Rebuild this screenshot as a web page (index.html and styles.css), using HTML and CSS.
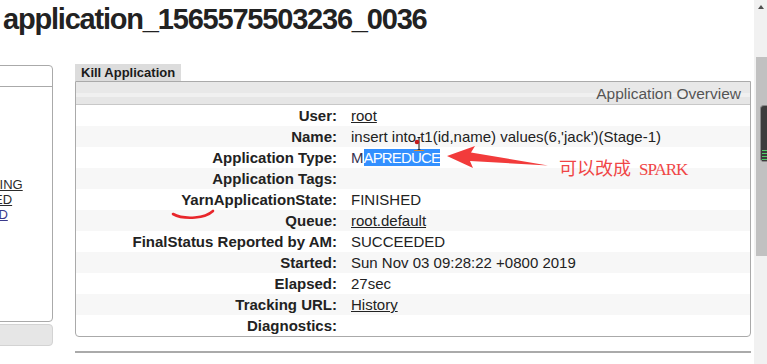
FILE: index.html
```html
<!DOCTYPE html>
<html lang="en">

<head>
    <meta charset="UTF-8" />
    <title>Application application_1565575503236_0036</title>
    <link rel="stylesheet" href="styles.css">
</head>

<body>
    <div class="page">
        <div class="content">
            <h1 class="app-title">application_1565575503236_0036</h1>

            <div class="layout">
                <!-- Left navigation (scrolled partly out of view) -->
                <aside class="nav">
                    <div class="nav-box">
                        <div class="nav-head"></div>
                        <ul class="nav-list">
                            <li><a href="#">NEW_SAVING</a></li>
                            <li><a href="#">SUBMITTED</a></li>
                            <li><a href="#" class="visited">ACCEPTED</a></li>
                        </ul>
                    </div>
                    <div class="nav-fold"></div>
                </aside>

                <main class="main">
                    <button class="kill-btn">Kill Application</button>
                    <div class="overview">
                        <div class="overview-head">Application Overview</div>
                        <table class="info">
                            <tr><th>User:</th><td><a href="#">root</a></td></tr>
                            <tr><th>Name:</th><td>insert into t1(id,name) values(6,'jack')(Stage-1)</td></tr>
                            <tr><th>Application Type:</th><td><span class="dim">M</span><span class="sel">APREDUCE</span></td></tr>
                            <tr><th>Application Tags:</th><td></td></tr>
                            <tr><th>YarnApplicationState:</th><td>FINISHED</td></tr>
                            <tr><th>Queue:</th><td><a href="#">root.default</a></td></tr>
                            <tr><th>FinalStatus Reported by AM:</th><td>SUCCEEDED</td></tr>
                            <tr><th>Started:</th><td>Sun Nov 03 09:28:22 +0800 2019</td></tr>
                            <tr><th>Elapsed:</th><td>27sec</td></tr>
                            <tr><th>Tracking URL:</th><td><a href="#">History</a></td></tr>
                            <tr><th>Diagnostics:</th><td></td></tr>
                        </table>
                    </div>
                    <div class="next-section"></div>
                </main>
            </div>

            <!-- Hand-drawn annotations over the screenshot -->
            <svg class="marks" width="754" height="364" viewBox="0 0 754 364">
                <path d="M447,156 L475,146 L471,152.5 L548,165.5 L470,161 L473,168 Z" fill="#f23b3b" />
                <path d="M173,214 Q181,218.5 195,217.5 Q207,216.5 213,211" fill="none" stroke="#e8262b" stroke-width="2.6" stroke-linecap="round" />
                <path d="M417.5,137.5 h3 M419,137.5 v12.5 M417.5,150 h3" stroke="#111" stroke-width="1" fill="none" />
                <line x1="414" y1="150.5" x2="424" y2="150.5" stroke="#d9892f" stroke-width="1" />
                <circle cx="417" cy="142" r="2.3" fill="#c41a1a" />
            </svg>
            <div class="note">可以改成 <span class="note-en">SPARK</span></div>
        </div>

        <div class="scrollbar">
            <div class="scroll-up"></div>
            <div class="scroll-thumb"></div>
        </div>
        <div class="widget"><div class="widget-bars"></div></div>
    </div>
</body>

</html>
```

FILE: styles.css
```css
* {
    box-sizing: border-box;
    margin: 0;
    padding: 0;
}

body {
    font-family: 'Liberation Sans', Arial, sans-serif;
    background-color: #ffffff;
    color: #222;
    overflow: hidden;
}

a {
    color: #222;
    text-decoration: underline;
}

.page {
    position: relative;
    display: flex;
    width: 767px;
    height: 364px;
    overflow: hidden;
}

.content {
    position: relative;
    flex: 1;
    overflow: hidden;
}

.app-title {
    margin: 3px 0 0 3px;
    font-size: 29px;
    line-height: 33px;
    font-weight: 700;
    letter-spacing: -1.2px;
    white-space: nowrap;
}

.layout {
    display: flex;
    align-items: flex-start;
    margin-top: 28px;
}

/* Left navigation */
.nav {
    flex: 0 0 200px;
    width: 200px;
    margin-left: -147px;
    margin-top: 1px;
}

.nav-box {
    height: 257px;
    border: 1px solid #aaa;
    border-radius: 0 4px 4px 0;
    overflow: hidden;
}

.nav-head {
    height: 21px;
    border-bottom: 1px solid #aaa;
}

.nav-list {
    list-style: none;
    padding: 90px 0 0 83px;
    font-size: 13px;
    line-height: 15px;
}

.nav-list a {
    color: #2b2b2b;
}

.nav-list a.visited {
    color: #3a3a8c;
}

.nav-fold {
    height: 22px;
    margin-top: 2px;
    background: #e6e6e6;
    border: 1px solid #d3d3d3;
    border-radius: 0 4px 4px 0;
}

/* Main panel */
.main {
    flex: 0 0 676px;
    width: 676px;
    margin-left: 22px;
}

.kill-btn {
    display: block;
    height: 17px;
    padding: 0 6px;
    border: none;
    background: #dcdcdc;
    color: #1a1a1a;
    font-family: 'Liberation Sans', Arial, sans-serif;
    font-size: 13px;
    font-weight: 700;
    line-height: 17px;
}

.overview {
    border: 1px solid #aaa;
    border-radius: 0 0 4px 4px;
    overflow: hidden;
}

.overview-head {
    height: 23px;
    border-bottom: 1px solid #c8c8c8;
    background: linear-gradient(#e8e8e8 0, #e8e8e8 48%, #f0f0f0 48%, #f0f0f0 68%, #e6e6e6 68%);
    padding-right: 9px;
    text-align: right;
    color: #555;
    font-size: 15.5px;
    line-height: 23px;
}

.info {
    width: 100%;
    table-layout: fixed;
    border-collapse: collapse;
    border-spacing: 0;
    font-size: 15px;
}

.info tr {
    height: 21px;
}

.info tr:nth-child(even) {
    background: #f7f7f7;
}

.info th {
    width: 266px;
    padding: 0 5px 0 0;
    text-align: right;
    font-weight: 700;
    line-height: 21px;
    white-space: nowrap;
}

.info td {
    padding: 0 0 0 9px;
    line-height: 21px;
    white-space: nowrap;
}

.dim {
    color: #353350;
}

.sel {
    background: #3390ff;
    color: #ffffff;
    letter-spacing: -0.85px;
}

.next-section {
    margin-top: 14px;
    border-top: 2px solid #aaa;
}

/* Annotations */
.marks {
    position: absolute;
    top: 0;
    left: 0;
    pointer-events: none;
}

.note {
    position: absolute;
    top: 158px;
    left: 559px;
    color: #f04646;
    font-family: 'Noto Sans CJK SC', sans-serif;
    font-size: 18px;
    line-height: 18px;
    white-space: nowrap;
}

.note-en {
    margin-left: 4px;
    font-family: 'Liberation Serif', serif;
    font-size: 17px;
    letter-spacing: -1px;
}

/* Fake browser scrollbar */
.scrollbar {
    flex: 0 0 13px;
    width: 13px;
    background: #f1f1f1;
    padding-top: 5px;
}

.scroll-up {
    width: 0;
    height: 0;
    margin-left: 4px;
    border-left: 3.5px solid transparent;
    border-right: 3.5px solid transparent;
    border-bottom: 4px solid #505050;
}

.scroll-thumb {
    width: 11px;
    height: 199px;
    margin: 48px 0 0 2px;
    background: #c1c1c1;
}

.widget {
    position: absolute;
    top: 105px;
    left: 760px;
    width: 8px;
    height: 57px;
    background: #3c3c3c;
    border: 1px solid #8a8a8a;
    border-right: none;
    border-radius: 4px 0 0 4px;
    padding-top: 44px;
}

.widget-bars {
    height: 11px;
    margin-left: 1px;
    background: repeating-linear-gradient(#4fd06a 0, #4fd06a 1px, #3c3c3c 1px, #3c3c3c 3px);
}
```
